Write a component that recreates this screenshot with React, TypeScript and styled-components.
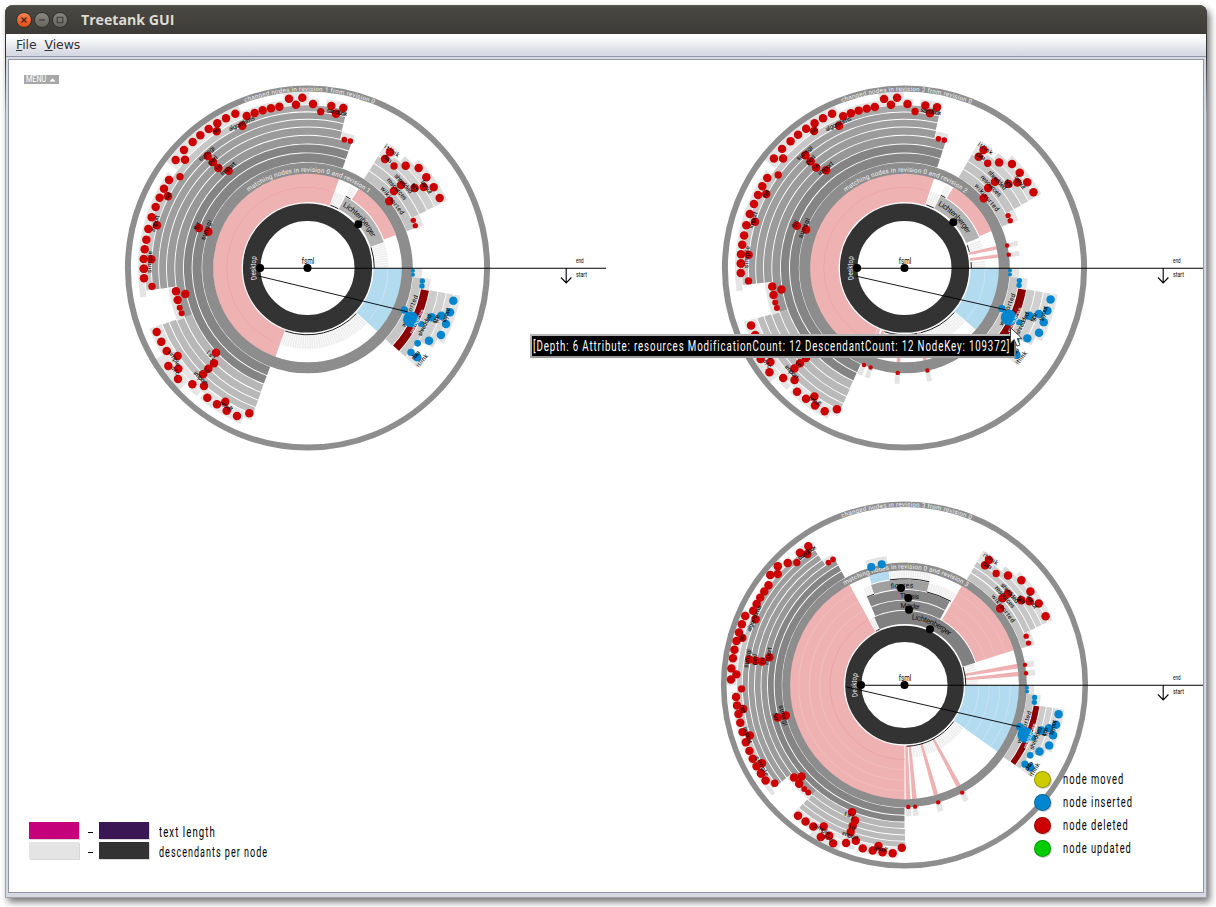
import React, { useLayoutEffect, useRef, useState } from "react";
import styled, { createGlobalStyle } from "styled-components";

const GlobalStyle = createGlobalStyle`
  html, body { margin: 0; padding: 0; background: #fff; }
  * { box-sizing: border-box; }
`;

/* ---------- window chrome ---------- */

const Desktop = styled.div`
  width: 1216px;
  height: 907px;
  padding: 5px 0 0 5px;
  overflow: hidden;
  position: relative;
  background: #fff;
`;

const Window = styled.div`
  width: 1202px;
  height: 893px;
  display: flex;
  flex-direction: column;
  padding: 0 1px 1px;
  border-radius: 8px 8px 0 0;
  background: linear-gradient(#32312d 0, #32312d 50px, #a2a2a4 110px);
  box-shadow: 3px 4px 7px rgba(0, 0, 0, 0.55);
`;

const TitleBar = styled.div`
  height: 29px;
  flex: none;
  display: flex;
  align-items: center;
  gap: 2px;
  padding-left: 11px;
  margin: 0 -1px;
  border-radius: 8px 8px 0 0;
  background: linear-gradient(#5a5954 0, #494843 2px, #3c3b37 100%);
`;

const WindowButton = styled.span<{ $close?: boolean }>`
  width: 16px;
  height: 16px;
  border-radius: 50%;
  display: flex;
  border: 1px solid #33322e;
  background: ${(p) => (p.$close ? "linear-gradient(#f68355, #df4c14)" : "linear-gradient(#8a8880, #65645d)")};
`;

const Title = styled.div`
  margin-left: 11px;
  color: #dfdbd2;
  font: bold 14px "Open Sans", "Noto Sans", sans-serif;
`;

const MenuBar = styled.div`
  height: 23px;
  flex: none;
  display: flex;
  gap: 8px;
  padding: 3px 10px 0;
  border-bottom: 1px solid #9297a6;
  background: linear-gradient(#fff 10%, #d6d9e2 90%);
  color: #333;
  font: 12.5px/16px "DejaVu Sans", sans-serif;
`;

const MenuItem = styled.span`
  letter-spacing: -0.1px;
`;

const Frame = styled.div`
  flex: 1;
  padding: 2px 2px 4px;
  background: #d6d9e2;
`;

const Canvas = styled.div`
  position: relative;
  width: 1196px;
  height: 834px;
  border: 1px solid #8f96a6;
  background: #fff;
  display: grid;
  grid-template-columns: 597px 597px;
  grid-template-rows: 417px 416px;
  overflow: hidden;
`;

const ChartSvg = styled.svg`
  display: block;
  width: 597px;
  height: 416px;
  overflow: visible;
  font-family: Roboto, "Liberation Sans", sans-serif;
`;

/* ---------- overlays ---------- */

const MenuButton = styled.div`
  position: absolute;
  left: 15px;
  top: 15px;
  width: 35px;
  height: 9px;
  padding-left: 2px;
  display: flex;
  align-items: center;
  gap: 3px;
  background: #a8a8a8;
  color: #fff;
  font: 9px/9px Roboto, "Liberation Sans", sans-serif;
`;

const ColourLegend = styled.div`
  position: absolute;
  left: 20px;
  top: 762px;
  display: grid;
  grid-template-columns: 50px 20px 51px 120px;
  grid-auto-rows: 17px;
  row-gap: 3px;
  align-items: center;
`;

const Swatch = styled.span<{ $c: string }>`
  height: 17px;
  width: 50px;
  background: ${(p) => p.$c};
  box-shadow: 1px 1px 0 #d8d8d8;
`;

const Dash = styled.span`
  width: 5px;
  height: 1px;
  margin-left: 9px;
  margin-top: 4px;
  background: #000;
`;

const LegendText = styled.span`
  color: #000;
  font: 14.5px/17px Roboto, "Liberation Sans", sans-serif;
  letter-spacing: 1.6px;
  padding: 4px 0 0 9px;
`;

const ChangeLegend = styled.div`
  position: absolute;
  left: 1026px;
  top: 708px;
  display: flex;
  flex-direction: column;
`;

const ChangeRow = styled.div`
  height: 23px;
  display: flex;
  align-items: center;
`;

const ChangeDot = styled.span<{ $c: string }>`
  width: 17px;
  height: 17px;
  margin-left: -1px;
  border-radius: 50%;
  background: ${(p) => p.$c};
  border: 1px solid rgba(0, 0, 0, 0.25);
  box-shadow: 1px 1px 0 #ccc;
`;

const ChangeText = styled(LegendText)`
  padding: 0 0 0 12px;
`;

const Tooltip = styled.div`
  position: absolute;
  left: 521px;
  top: 274px;
  width: 486px;
  height: 24px;
  border: 2px solid #b5b5b5;
  border-right-color: #777;
  border-bottom-color: #999;
  background: #000;
  color: #fff;
  padding-left: 1px;
  letter-spacing: 1.3px;
  font: 14.5px/22px Roboto, "Liberation Sans", sans-serif;
`;

const Pointer = styled.svg`
  position: absolute;
  left: 1000px;
  top: 266px;
  width: 15px;
  height: 22px;
`;

const FitBox = styled.span`
  display: inline-block;
  white-space: nowrap;
`;

const FitSpan = styled.span`
  display: inline-block;
  white-space: nowrap;
  transform-origin: 0 50%;
`;

/* Squeezes a line of text into a fixed width, as the narrow interface font does. */
function Fit({ width, children }: { width: number; children: string }) {
  const ref = useRef<HTMLSpanElement>(null);
  const [scale, setScale] = useState(1);
  useLayoutEffect(() => {
    if (ref.current) setScale(width / ref.current.offsetWidth);
  }, [width, children]);
  return (
    <FitBox style={{ width }}>
      <FitSpan ref={ref} style={{ transform: `scaleX(${scale})` }}>
        {children}
      </FitSpan>
    </FitBox>
  );
}

/* ---------- sunburst geometry ---------- */

type Group = "main" | "right" | "blue";
type Map1 = (v: number) => number;

const RED = "#cc0000";
const BLUE = "#0086cf";
const PINK = "#efb2b3";
const SKY = "#b3dbef";
const LIGHT = "#e4e4e4";

const BASE = [105.3, 115, 124, 132.7, 141, 148.8, 156, 163, 170, 177];

const rad = (a: number) => (a * Math.PI) / 180;
const pt = (r: number, a: number) => `${(r * Math.cos(rad(a))).toFixed(2)} ${(r * Math.sin(rad(a))).toFixed(2)}`;

function sector(r0: number, r1: number, a0: number, a1: number) {
  const big = a1 - a0 > 180 ? 1 : 0;
  return `M${pt(r0, a0)}L${pt(r1, a0)}A${r1} ${r1} 0 ${big} 1 ${pt(r1, a1)}L${pt(r0, a1)}A${r0} ${r0} 0 ${big} 0 ${pt(r0, a0)}Z`;
}
function arc(r: number, a0: number, a1: number) {
  return `M${pt(r, a0)}A${r} ${r} 0 ${a1 - a0 > 180 ? 1 : 0} 1 ${pt(r, a1)}`;
}
function remapRadius(r: number, edges: number[]) {
  if (r <= BASE[0]) return edges[0] + (r - BASE[0]);
  for (let i = 1; i < BASE.length; i++)
    if (r <= BASE[i]) return edges[i - 1] + ((r - BASE[i - 1]) / (BASE[i] - BASE[i - 1])) * (edges[i] - edges[i - 1]);
  return edges[9] + (r - BASE[9]);
}

/* layer from, layer to, start angle, end angle, fill */
type Band = [number, number, number, number, string];
const BANDS: Record<Group, Band[]> = {
  main: [
    [0, 1, 110.7, 289.4, "#858585"],
    [1, 2, 110.7, 289.4, "#848484"],
    [2, 3, 158, 289.4, "#979797"],
    [3, 4, 172, 284.2, "#9b9b9b"],
    [4, 5, 172, 284, "#9e9e9e"],
    [5, 6, 172, 284, "#9e9e9e"],
    [6, 7, 172, 247, "#c6c6c6"],
    [6, 7, 247, 284, "#a8a8a8"],
    [7, 8, 170, 214.5, LIGHT],
    [7, 9, 217, 247, LIGHT],
    [7, 8, 247, 262, LIGHT],
    [7, 9, 262, 270.6, LIGHT],
    [7, 8, 270.6, 274, LIGHT],
    [7, 8, 276.5, 284, LIGHT],
    [3, 4, 284.5, 289.6, LIGHT],
    [3, 4, 158, 171.5, LIGHT],
    [2, 3, 110.7, 158, "#b6b6b6"],
    [3, 4, 110.5, 158, "#b8b8b8"],
    [4, 5, 110.5, 158.5, "#bababa"],
    [5, 6, 110.5, 158.7, "#bdbdbd"],
    [6, 7, 110.2, 159, LIGHT],
    [7, 8, 149, 159, LIGHT],
    [7, 9, 136.5, 149, LIGHT],
    [7, 8, 130.8, 134, LIGHT],
    [7, 8, 113.3, 129.5, LIGHT],
  ],
  right: [
    [0, 1, -57.6, -20.3, "#c3c3c3"],
    [1, 2, -57.6, -25.6, "#c3c3c3"],
    [1, 2, -25.6, -20, LIGHT],
    [2, 3, -57.7, -25.7, "#c6c6c6"],
    [3, 5, -57.8, -52, LIGHT],
    [3, 4, -52, -25.8, "#cfcfcf"],
    [4, 5, -48.9, -25.8, "#dadada"],
    [5, 6, -44.4, -25.8, LIGHT],
  ],
  blue: [
    [0, 1, 0.3, 5, LIGHT],
    [0, 1, 5, 42.4, "#c6c6c6"],
    [1, 2, 5, 10.4, LIGHT],
    [1, 2, 10.6, 42.2, "#8b0000"],
    [2, 3, 10.3, 42.2, "#cbcbcb"],
    [3, 4, 10.3, 33, "#d0d0d0"],
    [3, 5, 38, 42.3, LIGHT],
    [4, 5, 10.3, 32.5, "#d9d9d9"],
    [5, 6, 10.3, 29.1, LIGHT],
  ],
};

/* Node markers, measured on a grid of thirds of a pixel: group, grid origin, then x, y, radius. */
const NODES: { group: Group; ox: number; oy: number; p: number[][] }[] = [
  {
    group: "main", ox: -197.5, oy: -198,
    p: [[537,86],[577,83],[558,104],[376,131],[348,145],[322,160],[296,177],[271,196],[248,216],[222,240],[197,270],[225,269],[410,138],[434,129],[458,121],[483,115],[508,110],[397,167],[320,184],[210,320,11],[177,330],[162,356],[149,383],[174,379],[137,411],[125,442],[141,466],[115,477],[109,509],[104,538],[101,567],[124,568],[101,596],[293,258],[309,276],[325,294],[356,302],[267,474],[295,485]],
  },
  { group: "main", ox: -7.5, oy: -198, p: [[39,102],[62,125,11],[94,108],[130,114],[108,131],[133,209,8.5],[151,213,8.5]] },
  {
    group: "main", ox: -197.5, oy: -18,
    p: [[102,56],[102,85],[126,109,11],[198,124],[226,132],[203,150],[209,173,9],[215,190,9],[140,246],[154,275],[170,303],[203,318],[175,348],[205,356],[204,387],[247,403],[318,308],[312,340],[295,356],[279,373],[282,408],[292,443],[321,463],[346,455],[350,482],[381,498],[418,490]],
  },
  {
    group: "right", ox: -7.5, oy: -198,
    p: [[270,247],[255,267],[282,288,11],[317,287],[356,294],[379,322],[401,352],[419,384],[303,345],[282,363],[268,394],[344,354],[371,351],[340,451,8],[346,467,8]],
  },
  {
    group: "blue", ox: -7.5, oy: -18,
    p: [[339,62,6],[339,74,6],[367,93,8],[366,108,8],[460,152],[450,187],[424,197],[438,222],[395,202],[423,255],[387,272],[313,180,11],[363,222,9],[353,280,10],[333,307,11],[352,322]],
  },
];

/* group, text, centre x, centre y, length, colour */
type Label = [Group, string, number, number, number, string?];
const LABELS: Label[] = [
  ["right", "wikisorted", 85, -67.5, 34], ["right", "resources", 89.5, -79, 27], ["right", "shredded", 96, -84.5, 24],
  ["right", "type", 107.5, -80.7, 9], ["right", "layout", 119, -81, 15], ["right", "itlink", 84.5, -117, 17], ["right", "data", 79.8, -109.5, 10],
  ["main", "algorithms", -66, -144.5, 28], ["main", "src", -91, -138, 8], ["main", "sunsgi", -101, -114.5, 19],
  ["main", "perl", -95, -107.8, 11], ["main", "in", -89, -101, 6], ["main", "import", -79.5, -99.5, 18],
  ["main", "net", -140, -72, 8], ["main", "import", -152.5, -44.5, 17], ["main", "simple", -158, -6, 22],
  ["main", "Sir", -110.5, -42, 8], ["main", "sunsgi", -101.5, -38, 21], ["main", "sandbox", 29.5, -156, 21],
  ["main", "tst", -96.5, 87, 10], ["main", "in", -100.5, 102, 6], ["main", "import", -106.8, 110, 17],
  ["main", "simple", -133.5, 90, 18], ["main", "src", -132, 102.5, 10], ["main", "result", -81, 138, 14],
  ["blue", "wikisorted", 102, 43, 34], ["blue", "shredded", 117, 57, 24],
  ["blue", "type", 128.5, 51, 9], ["blue", "layout", 138.5, 47, 15], ["blue", "data", 108, 87, 10], ["blue", "itlink", 114.5, 92.5, 15],
];
const FOCUSED: Label = ["blue", "resources", 109.5, 53.5, 27, "#fff"];

interface ChartSpec {
  id: string;
  rev: number;
  edges: number[];
  angle: Record<Group, Map1>;
  outer: [number, number];
  ring: [number, number];
  dark: [number, number];
  inner: number;
  pinkMain: [number, number];
  skyTo: number;
  slivers: number[];
  sliverWidth: number;
  cross: [number, number, number, number];
  extra?: number[][];
}

function Chart({ spec, children }: { spec: ChartSpec; children?: React.ReactNode }) {
  const { edges, angle, ring, dark, outer, inner } = spec;
  const project = (group: Group, x: number, y: number) => {
    let a = (Math.atan2(y, x) * 180) / Math.PI;
    if (group === "main" && a < 0) a += 360;
    const r = remapRadius(Math.hypot(x, y), edges);
    const b = angle[group](a);
    return { x: r * Math.cos(rad(b)), y: r * Math.sin(rad(b)), b };
  };
  const mid = (p: [number, number]) => (p[0] + p[1]) / 2;
  const wid = (p: [number, number]) => p[1] - p[0];
  const groups: Group[] = ["main", "right", "blue"];
  const renderLabel = ([g, t, x, y, len, c = "#000"]: Label, n: number) => {
    const q = project(g, x, y);
    const m = ((q.b % 360) + 360) % 360;
    const turn = m > 0 && m < 175 ? q.b - 90 : q.b + 90;
    return (
      <text key={n} transform={`translate(${q.x} ${q.y}) rotate(${turn})`} fill={c} fontSize="6.4" y="2.2" x={-len / 2} textLength={len}>
        {t}
      </text>
    );
  };
  const focus = project("blue", 103.5, 51.3);
  return (
    <ChartSvg viewBox="-298.5 -208 597 416">
      <defs>
        <path id={`${spec.id}-outer`} d={arc(outer[0] + 0.5, 180, 360)} />
        <path id={`${spec.id}-ring`} d={arc(ring[0] + 2, 180, 360)} />
        <path id={`${spec.id}-dark`} d={arc(dark[0] + 5, 90, 270)} />
      </defs>
      {groups.flatMap((g) =>
        BANDS[g].map(([i, j, a0, a1, c], n) => (
          <path key={g + n} fill={c} d={sector(edges[i] + 0.45, edges[j] - 0.45, angle[g](a0), angle[g](a1))} />
        ))
      )}
      {spec.slivers.map((a) => (
        <g key={a}>
          <path fill={LIGHT} d={sector(edges[0], edges[1] + 1, a - 1.2, a + 1.3)} />
          <path fill={PINK} d={sector(inner, ring[0], a - spec.sliverWidth, a + spec.sliverWidth)} />
        </g>
      ))}
      <path fill={PINK} d={sector(inner, ring[0] + 0.5, ...spec.pinkMain)} />
      <path fill={SKY} d={sector(inner, ring[0] + 0.5, 0, spec.skyTo)} />
      <circle r={mid(outer)} fill="none" stroke="#8e8e8e" strokeWidth={wid(outer)} />
      <circle r={mid(ring)} fill="none" stroke="#8d8d8d" strokeWidth={wid(ring)} />
      <circle r={mid(dark)} fill="none" stroke="#333" strokeWidth={wid(dark)} />
      {children}
      <g fill="#f2f2f2">
        <text textAnchor="middle" textLength={132} fontSize="6.2">
          <textPath href={`#${spec.id}-outer`} startOffset="50.4%" textLength={132}>
            {`changed nodes in revision ${spec.rev} from revision 0`}
          </textPath>
        </text>
        <text textAnchor="middle" textLength={129} fontSize="6.4">
          <textPath href={`#${spec.id}-ring`} startOffset="50.4%" textLength={129}>
            {`matching nodes in revision 0 and revision ${spec.rev}`}
          </textPath>
        </text>
        <text textAnchor="middle" fontSize="7.5">
          <textPath href={`#${spec.id}-dark`} startOffset="50%" textLength={23} lengthAdjust="spacingAndGlyphs">
            Desktop
          </textPath>
        </text>
      </g>
      {spec.slivers.map((a) => (
        <circle key={a} cx={(edges[0] - 0.2) * Math.cos(rad(a))} cy={(edges[0] - 0.2) * Math.sin(rad(a))} r="2.2" fill={RED} />
      ))}
      {NODES.map((s, n) => (
        <g key={n} fill={s.group === "blue" ? BLUE : RED}>
          {s.p.map(([x, y, r = 12.7], i) => {
            const q = project(s.group, x / 3 + s.ox, y / 3 + s.oy);
            return <circle key={i} cx={q.x} cy={q.y} r={r / 3} />;
          })}
        </g>
      ))}
      {spec.extra?.map(([x, y]) => <circle key={x} cx={x} cy={y} r="4.1" fill={BLUE} />)}
      {LABELS.map(renderLabel)}
      <circle cx={focus.x} cy={focus.y} r="7.9" fill={BLUE} />
      {renderLabel(FOCUSED, 0)}
      <g stroke="#000" fill="none">
        <path strokeWidth="1.1" d={`M${-dark[0]} .3H298.5`} />
        <path strokeWidth=".9" d={`M${spec.cross[0]} ${spec.cross[1]}L${spec.cross[2]} ${spec.cross[3]}`} />
        <path strokeWidth="1.1" d="M258.7 0V15M253.5 9.5L258.7 15L263.9 9.5" />
      </g>
      <circle r="4" />
      <circle cx={-dark[0] - 0.4} r="4" />
      <text x="-5.8" y="-4" fontSize="8.5" textLength="12.5" lengthAdjust="spacingAndGlyphs">fsml</text>
      <text x="268.5" y="-5.5" fontSize="7" textLength="7.5" lengthAdjust="spacingAndGlyphs">end</text>
      <text x="268.5" y="8.5" fontSize="7" textLength="11" lengthAdjust="spacingAndGlyphs">start</text>
    </ChartSvg>
  );
}

function Ribs({ r0, r1, a0, a1 }: { r0: number; r1: number; a0: number; a1: number }) {
  return <path d={arc((r0 + r1) / 2, a0, a1)} fill="none" stroke="#eeeeee" strokeWidth={r1 - r0} strokeDasharray="1.7 .6" />;
}
function Hairline({ r, a0, a1, c = "#000" }: { r: number; a0: number; a1: number; c?: string }) {
  return <path d={arc(r, a0, a1)} fill="none" stroke={c} strokeWidth=".9" />;
}
function ArcLabel({ id, r, a0, a1, size = 8, children }: { id: string; r: number; a0: number; a1: number; size?: number; children: string }) {
  return (
    <>
      <path id={id} d={arc(r, a0, a1 + 4)} fill="none" />
      <text fontSize={size} fill="#111">
        <textPath href={`#${id}`} textLength={r * rad(a1 - a0)}>{children}</textPath>
      </text>
    </>
  );
}

const common = {
  edges: BASE,
  outer: [176.6, 182.6] as [number, number],
  ring: [94.3, 105.3] as [number, number],
  dark: [47, 64.6] as [number, number],
  inner: 66,
};

const FIRST: ChartSpec = {
  ...common, id: "r1", rev: 1,
  angle: { main: (a) => a, right: (a) => a, blue: (a) => a },
  pinkMain: [109.9, 289.5], skyTo: 42.3, slivers: [], sliverWidth: 1,
  cross: [-49, 8, 100, 43.8],
};
const SECOND: ChartSpec = {
  ...common, id: "r2", rev: 2,
  angle: { main: (a) => 114.5 + (a - 110.7) * 0.971, right: (a) => -59.4 + (a + 57.8) * 0.97, blue: (a) => a * 0.965 },
  pinkMain: [114, 288.2], skyTo: 40.8, slivers: [-12.4, -7.3, 77.4, 93.7, 108.8, 112.7], sliverWidth: 1.1,
  cross: [-49, 8, 102, 42],
};
const THIRD: ChartSpec = {
  id: "r3", rev: 3,
  edges: [122.3, 130.3, 137, 143.5, 150, 156.3, 162.3, 168, 173.3, 178.3],
  angle: { main: (a) => 90 + (a - 110.7) * 0.845, right: (a) => -59.7 + (a + 57.8) * 1.128, blue: (a) => a * 0.85 },
  outer: [178, 183.6], ring: [114.4, 122.4], dark: [43.1, 59.3], inner: 60.7,
  pinkMain: [90, 241.3], skyTo: 35.7, slivers: [-9.5, -5.5, 61.8, 74, 85, 88.2], sliverWidth: 1.15,
  cross: [-59, 1.7, 116, 42],
  extra: [[-33.2, -118], [-22.8, -120.7]],
};

function RevisionCore({ id, ribs, licht, pink, dot }: { id: string; ribs: number[][]; licht: [number, number]; pink: [number, number]; dot: [number, number] }) {
  return (
    <>
      {ribs.map(([a0, a1], i) => (
        <g key={i}>
          <Ribs r0={67.5} r1={81} a0={a0} a1={a1} />
          <Hairline r={66.8} a0={a0} a1={a1} />
        </g>
      ))}
      <path fill="#b3b3b3" d={sector(66.5, 80.5, ...licht)} />
      <path fill={PINK} d={sector(81.5, 94.5, ...pink)} />
      <Ribs r0={82} r1={92} a0={licht[0]} a1={pink[0] - 1} />
      <Hairline r={81.3} a0={licht[0]} a1={pink[0] - 1} />
      <Hairline r={80.8} a0={115} a1={286} c="#eaa5a7" />
      <Hairline r={80.8} a0={0} a1={40} c="#cbe7f5" />
      <ArcLabel id={id} r={71} a0={licht[0] + 1.5} a1={licht[1] - 7} size={7.6}>Lichtenberger</ArcLabel>
      <circle cx={dot[0]} cy={dot[1]} r="4" />
    </>
  );
}

function ThirdCore() {
  return (
    <>
      <Ribs r0={62} r1={74} a0={242} a1={246} />
      <Hairline r={61} a0={242} a1={246} />
      <path fill="#808080" d={sector(61, 74.2, 246, 342.5)} />
      <path fill="#868686" d={sector(75, 84.4, 247, 298.4)} />
      <path fill="#868686" d={sector(85.3, 95, 247, 298.4)} />
      <path fill="#a0a0a0" d={sector(96, 105.5, 251.5, 283.5)} />
      <Ribs r0={96.5} r1={105} a0={247} a1={251.3} />
      <Ribs r0={96.5} r1={105} a0={283.7} a1={299} />
      <Hairline r={95.7} a0={247} a1={251.5} />
      <Hairline r={95.7} a0={283.5} a1={299} />
      <path fill={SKY} d={sector(106.5, 114.6, 252, 262)} />
      <path fill={LIGHT} d={sector(122.5, 130.3, 252.4, 262.1)} />
      <Ribs r0={107} r1={114.6} a0={262.2} a1={283.5} />
      <Hairline r={106.2} a0={262} a1={283.5} />
      <path fill={PINK} d={sector(75, 114.6, -60, -17.7)} />
      <Ribs r0={62} r1={73} a0={-17} a1={-11} />
      <Ribs r0={62} r1={73} a0={-4} a1={0} />
      <Ribs r0={62} r1={73} a0={36.5} a1={60.5} />
      <Ribs r0={62} r1={73} a0={63} a1={72.8} />
      <Ribs r0={62} r1={73} a0={75.2} a1={83.8} />
      <Hairline r={61.3} a0={-17} a1={0} />
      <Hairline r={61.3} a0={36.5} a1={88} />
      {[74.6, 84.9, 95.5, 106].map((r, i) => (
        <g key={r}>
          <Hairline r={r} a0={90} a1={241} c={i ? "#f2bfc0" : "#eaa0a3"} />
          <Hairline r={r} a0={0} a1={35.5} c="#c6e4f4" />
          {i > 0 && <Hairline r={r} a0={-59.5} a1={-18} c="#f0bcbd" />}
        </g>
      ))}
      <ArcLabel id="c-l" r={66} a0={-84} a1={-48} size={7.6}>Lichtenberger</ArcLabel>
      <ArcLabel id="c-m" r={77} a0={267} a1={281} size={7}>Marder</ArcLabel>
      <ArcLabel id="c-t" r={87} a0={267} a1={279.5} size={7}>Thesis</ArcLabel>
      <ArcLabel id="c-f" r={97.5} a0={262} a1={275} size={7}>figures</ArcLabel>
      <g>
        <circle cx="-3.5" cy="-97" r="4" />
        <circle cx="3.8" cy="-87" r="4" />
        <circle cx="4.5" cy="-75.3" r="4" />
        <circle cx="25.5" cy="-55.7" r="4" />
      </g>
    </>
  );
}

const CHANGES: [string, string, number][] = [
  ["node moved", "#cccc00", 61],
  ["node inserted", BLUE, 70],
  ["node deleted", "#cc0000", 66],
  ["node updated", "#00cc00", 69],
];

export default function App() {
  return (
    <Desktop>
      <GlobalStyle />
      <Window>
        <TitleBar>
          <WindowButton $close>
            <svg viewBox="0 0 14 14"><path d="M4.5 4.5l5 5m0-5l-5 5" stroke="#44200f" strokeWidth="1.2" /></svg>
          </WindowButton>
          <WindowButton>
            <svg viewBox="0 0 14 14"><path d="M4 7h6" stroke="#3b3a36" strokeWidth="1.2" /></svg>
          </WindowButton>
          <WindowButton>
            <svg viewBox="0 0 14 14"><path d="M4.2 4.2h5.6v5.6h-5.6z" fill="none" stroke="#3b3a36" strokeWidth="1.1" /></svg>
          </WindowButton>
          <Title><Fit width={93}>Treetank GUI</Fit></Title>
        </TitleBar>
        <MenuBar>
          <MenuItem><u>F</u>ile</MenuItem>
          <MenuItem><u>V</u>iews</MenuItem>
        </MenuBar>
        <Frame>
          <Canvas>
            <Chart spec={FIRST}>
              <RevisionCore id="a-l" ribs={[[-70, -62.5], [-18, 0], [43, 109.5]]} licht={[-62, -18.6]} pink={[-57.1, -20.4]} dot={[50.8, -43.7]} />
            </Chart>
            <Chart spec={SECOND}>
              <RevisionCore id="b-l" ribs={[[-71, -64], [-20, -14], [-5, 0], [41.5, 76], [79, 92], [95, 107.5]]} licht={[-63.5, -22]} pink={[-58.8, -23]} dot={[48.8, -45.7]} />
            </Chart>
            <span />
            <Chart spec={THIRD}>
              <ThirdCore />
            </Chart>
            <MenuButton>
              <Fit width={20}>MENU</Fit>
              <svg width="7" height="4" viewBox="0 0 7 4"><path d="M.5 3.5L3.5.3L6.5 3.5z" fill="#fff" /></svg>
            </MenuButton>
            <ColourLegend>
              <Swatch $c="#c4007a" />
              <Dash />
              <Swatch $c="#3a1654" />
              <LegendText><Fit width={57}>text length</Fit></LegendText>
              <Swatch $c="#e4e4e4" />
              <Dash />
              <Swatch $c="#333" />
              <LegendText><Fit width={109}>descendants per node</Fit></LegendText>
            </ColourLegend>
            <ChangeLegend>
              {CHANGES.map(([label, colour, width]) => (
                <ChangeRow key={label}>
                  <ChangeDot $c={colour} />
                  <ChangeText><Fit width={width}>{label}</Fit></ChangeText>
                </ChangeRow>
              ))}
            </ChangeLegend>
            <Tooltip>
              <Fit width={477}>[Depth: 6 Attribute: resources ModificationCount: 12 DescendantCount: 12 NodeKey: 109372]</Fit>
            </Tooltip>
            <Pointer viewBox="0 0 15 22">
              <path d="M1.5 1.5V17L5.2 13.6L8 20.2L11 18.8L8.2 12.6H13z" fill="#fff" stroke="#333" strokeWidth=".9" />
            </Pointer>
          </Canvas>
        </Frame>
      </Window>
    </Desktop>
  );
}
